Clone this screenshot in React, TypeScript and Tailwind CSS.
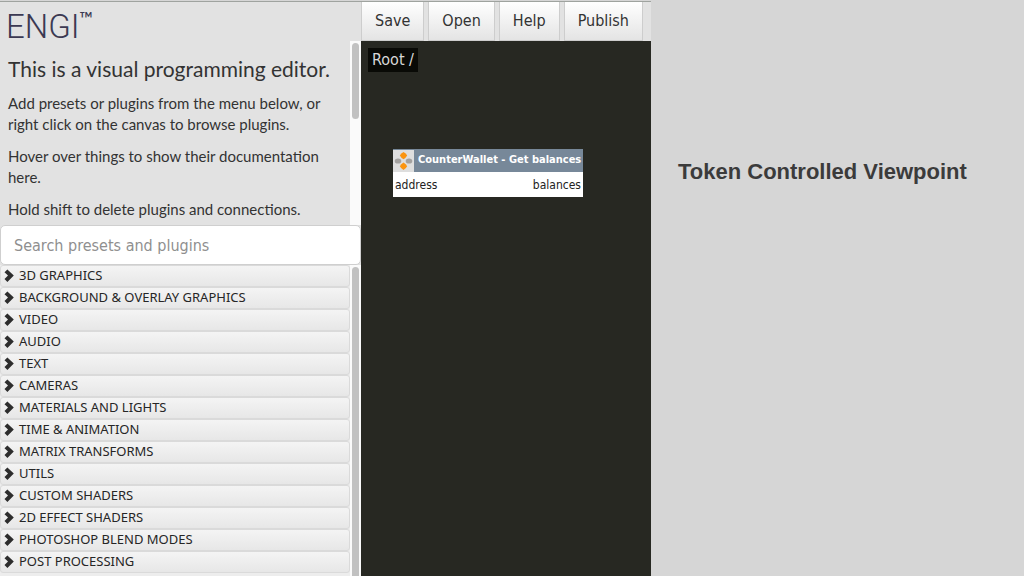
const categories = [
  '3D GRAPHICS',
  'BACKGROUND & OVERLAY GRAPHICS',
  'VIDEO',
  'AUDIO',
  'TEXT',
  'CAMERAS',
  'MATERIALS AND LIGHTS',
  'TIME & ANIMATION',
  'MATRIX TRANSFORMS',
  'UTILS',
  'CUSTOM SHADERS',
  '2D EFFECT SHADERS',
  'PHOTOSHOP BLEND MODES',
  'POST PROCESSING',
];

function Chevron() {
  return (
    <svg viewBox="0 0 10 14" className="h-3.5 w-2.5 shrink-0" fill="#2d2d2d" aria-hidden="true">
      <path d="M3.4 0.4 L9.8 6.6 L3.4 12.9 L0.5 10.1 L4 6.6 L0.5 3.2 Z" />
    </svg>
  );
}

function NodeIcon() {
  return (
    <svg viewBox="0 0 21 22" className="h-[22px] w-[21px] shrink-0 bg-[#dedede]" aria-hidden="true">
      <ellipse cx="5" cy="11" rx="3.3" ry="2.6" fill="#a3a19f" />
      <ellipse cx="16" cy="11" rx="3.3" ry="2.6" fill="#a3a19f" />
      <path d="M10.5 2 Q13 3.4 14.2 5.6 Q13 7.9 10.5 9.2 Q8 7.9 6.8 5.6 Q8 3.4 10.5 2 Z" fill="#fb9410" />
      <path d="M10.5 12.6 Q13 14 14.2 16.3 Q13 18.6 10.5 20 Q8 18.6 6.8 16.3 Q8 14 10.5 12.6 Z" fill="#fb9410" />
    </svg>
  );
}

function Documentation() {
  return (
    <section className="flex h-[184px] font-['Lato','Liberation_Sans',sans-serif] text-[#333]">
      <div className="min-w-0 flex-1 pl-2 pt-4">
        <h2 className="text-[21px] leading-6">This is a visual programming editor.</h2>
        <div className="mt-3 flex flex-col gap-[11px] text-[15px] leading-[21px]">
          <p>
            Add presets or plugins from the menu below, or
            <br />
            right click on the canvas to browse plugins.
          </p>
          <p>
            Hover over things to show their documentation
            <br />
            here.
          </p>
          <p>Hold shift to delete plugins and connections.</p>
        </div>
      </div>
      <div className="w-[11px] bg-[#fafafa] pl-0.5 pt-0.5">
        <div className="h-[76px] w-[7px] rounded-full bg-[#c1c1c1]" />
      </div>
    </section>
  );
}

function Sidebar() {
  return (
    <aside className="flex w-[361px] shrink-0 flex-col bg-[#e2e2e2]">
      <h1 className="flex h-[39px] items-start pl-1.5 font-['Roboto','Liberation_Sans',sans-serif] text-[33px] font-light leading-[50px] text-[#3b3952]">
        ENGI<span className="font-['Lato','Liberation_Sans',sans-serif] text-[18px] font-medium leading-8">™</span>
      </h1>
      <Documentation />
      <input
        type="search"
        aria-label="Search presets and plugins"
        placeholder="Search presets and plugins"
        className="h-10 w-full shrink-0 rounded-[5px] border border-[#cfcfcf] bg-white px-[13px] text-[16px] text-[#333] placeholder:text-[#8f8f8f]"
      />
      <div className="flex min-h-0 flex-1 bg-[#fafafa]">
        <ul className="min-w-0 flex-1 overflow-hidden bg-[#ededed]">
          {categories.map((name) => (
            <li key={name}>
              <button
                type="button"
                className="flex h-[22px] w-full items-center gap-[5px] rounded-[3px] border border-[#dadada] bg-linear-to-b from-[#f4f4f4] to-[#e7e7e7] pl-[3px] font-['Noto_Sans',sans-serif] text-[13px] text-[#262626]"
              >
                <Chevron />
                {name}
              </button>
            </li>
          ))}
        </ul>
        <div className="w-[11px] pl-0.5 pt-0.5">
          <div className="h-full w-[7px] rounded-t-full bg-[#c1c1c1]" />
        </div>
      </div>
    </aside>
  );
}

function Toolbar() {
  return (
    <nav className="flex h-[39px] gap-1 bg-[#e2e2e2]">
      {['Save', 'Open', 'Help', 'Publish'].map((label) => (
        <button
          key={label}
          type="button"
          className="border border-t-0 border-[#cdcdcd] bg-linear-to-b from-white to-[#e4e4e4] px-[13px] text-[16px] text-[#333]"
        >
          {label}
        </button>
      ))}
    </nav>
  );
}

function Canvas() {
  return (
    <main className="relative flex-1 bg-[#272822] p-[7px]">
      <div className="inline-block bg-[#090a06] px-1 text-[16px] leading-6 text-[#d8d8d8]">Root /</div>
      <article className="absolute left-8 top-[108px] w-[190px] bg-white">
        <header className="flex h-[23px] items-center gap-1 bg-[#778899] pr-0.5 text-[11px] font-bold text-white">
          <NodeIcon />
          <span className="flex-1 whitespace-nowrap">CounterWallet - Get balances</span>
        </header>
        <div className="flex h-[25px] items-center justify-between px-0.5 text-[12px] text-[#222]">
          <span>address</span>
          <span>balances</span>
        </div>
      </article>
    </main>
  );
}

export default function App() {
  return (
    <div className="flex h-screen overflow-hidden bg-[#d6d6d6] font-['DejaVu_Sans_Condensed','Noto_Sans',sans-serif]">
      <div className="flex w-[651px] shrink-0 flex-col border-t border-[#d6d6d6]">
        <div className="flex min-h-0 flex-1 border-t border-[#9fa39f]">
          <Sidebar />
          <div className="flex min-w-0 flex-1 flex-col">
            <Toolbar />
            <Canvas />
          </div>
        </div>
      </div>
      <section className="min-w-0 flex-1 pl-[27px] pt-[158px]">
        <h2 className="font-['Liberation_Sans',sans-serif] text-[22px] font-bold leading-7 text-[#3b3b3b]">
          Token Controlled Viewpoint
        </h2>
      </section>
    </div>
  );
}
